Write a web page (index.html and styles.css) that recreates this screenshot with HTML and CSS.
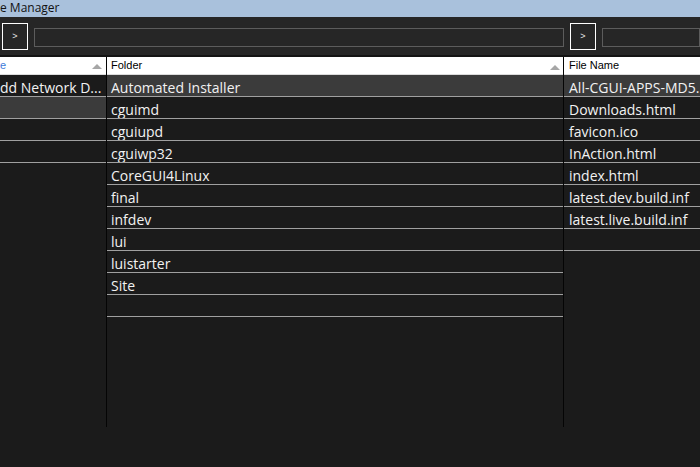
FILE: index.html
```html
<!DOCTYPE html>
<html>
<head>
<meta charset="utf-8">
<link rel="stylesheet" href="styles.css">
</head>
<body>
<div class="window">
  <div class="titlebar"><span class="title">e Manager</span></div>
  <div class="toolbar">
    <div class="navbtn nav-left">&gt;</div>
    <div class="pathbox path-left"></div>
    <div class="navbtn nav-right">&gt;</div>
    <div class="pathbox path-right"></div>
  </div>
  <div class="panes">
    <div class="pane pane-left">
      <div class="header"><span class="hdr-text clipped">e</span><span class="sort"></span></div>
      <div class="row"><span class="cell clipped-row">dd Network D...</span></div>
      <div class="row selected"><span class="cell"></span></div>
      <div class="row"><span class="cell"></span></div>
      <div class="row"><span class="cell"></span></div>
    </div>
    <div class="pane pane-mid">
      <div class="header"><span class="hdr-text">Folder</span><span class="sort"></span></div>
      <div class="row selected"><span class="cell">Automated Installer</span></div>
      <div class="row"><span class="cell">cguimd</span></div>
      <div class="row"><span class="cell">cguiupd</span></div>
      <div class="row"><span class="cell">cguiwp32</span></div>
      <div class="row"><span class="cell">CoreGUI4Linux</span></div>
      <div class="row"><span class="cell">final</span></div>
      <div class="row"><span class="cell">infdev</span></div>
      <div class="row"><span class="cell">lui</span></div>
      <div class="row"><span class="cell">luistarter</span></div>
      <div class="row"><span class="cell">Site</span></div>
      <div class="row"><span class="cell"></span></div>
    </div>
    <div class="pane pane-right">
      <div class="header"><span class="hdr-text">File Name</span></div>
      <div class="row selected"><span class="cell">All-CGUI-APPS-MD5.</span></div>
      <div class="row"><span class="cell">Downloads.html</span></div>
      <div class="row"><span class="cell">favicon.ico</span></div>
      <div class="row"><span class="cell">InAction.html</span></div>
      <div class="row"><span class="cell">index.html</span></div>
      <div class="row"><span class="cell">latest.dev.build.inf</span></div>
      <div class="row"><span class="cell">latest.live.build.inf</span></div>
      <div class="row"><span class="cell"></span></div>
    </div>
  </div>
</div>
</body>
</html>
```
FILE: styles.css
```css
html, body {
  margin: 0;
  padding: 0;
  background: #1b1b1b;
  overflow: hidden;
}
.window {
  width: 700px;
  height: 467px;
  overflow: hidden;
  background: #1b1b1b;
  font-family: "Open Sans", "Noto Sans", sans-serif;
}
.titlebar {
  height: 17px;
  background: #a9c1dc;
  overflow: hidden;
  white-space: nowrap;
}
.title {
  display: block;
  padding-left: 0;
  font-size: 12px;
  line-height: 15px;
  color: #111;
}
.toolbar {
  background: #262626;
  border-bottom: 2px solid #141414;
  display: flex;
  align-items: flex-start;
  padding-top: 6px;
  box-sizing: border-box;
  height: 40px;
  overflow: hidden;
}
.navbtn {
  flex: none;
  width: 26px;
  height: 27px;
  box-sizing: border-box;
  border: 1px solid #ffffff;
  color: #e8e8e8;
  font-family: "Liberation Sans", sans-serif;
  font-size: 9px;
  line-height: 25px;
  text-align: center;
}
.nav-left { margin-left: 2px; }
.nav-right { margin-left: 6px; }
.pathbox {
  flex: none;
  height: 19px;
  margin-top: 5px;
  margin-left: 6px;
  box-sizing: border-box;
  border: 1px solid #5c5c5c;
  background: #262626;
}
.path-left { width: 530px; }
.path-right { width: 98px; }
.panes {
  display: flex;
  height: 370px;
}
.pane {
  flex: none;
  overflow: hidden;
  background: #1b1b1b;
}
.pane-left { width: 106px; border-right: 1px solid #050505; }
.pane-mid { width: 456px; border-right: 1px solid #050505; }
.pane-right { flex: 1; }
.header {
  height: 18px;
  box-sizing: border-box;
  background: #ffffff;
  border-bottom: 1px solid #dcdcdc;
  display: flex;
  align-items: center;
  position: relative;
  white-space: nowrap;
}
.hdr-text {
  font-family: "Liberation Sans", Arial, sans-serif;
  font-size: 11px;
  color: #000;
  padding-left: 4px;
  line-height: 17px;
}
.pane-right .hdr-text { padding-left: 5px; }
.hdr-text.clipped {
  color: #3d7bd9;
  padding-left: 0;
}
.sort {
  position: absolute;
  right: 4px;
  top: 7px;
  width: 0;
  height: 0;
  border-left: 5px solid transparent;
  border-right: 5px solid transparent;
  border-bottom: 5px solid #a6a6a6;
}
.pane-mid .sort { right: 3px; top: 8px; }
.row {
  height: 22px;
  box-sizing: border-box;
  border-bottom: 1px solid #a0a0a0;
  overflow: hidden;
  white-space: nowrap;
}
.row.selected { background: #3b3b3b; }
.cell {
  display: block;
  padding-left: 4px;
  padding-top: 4px;
  font-size: 14px;
  line-height: 17px;
  color: #f2f2f2;
}
.pane-right .cell { padding-left: 5px; }
.cell.clipped-row {
  padding-left: 0;
}
```
